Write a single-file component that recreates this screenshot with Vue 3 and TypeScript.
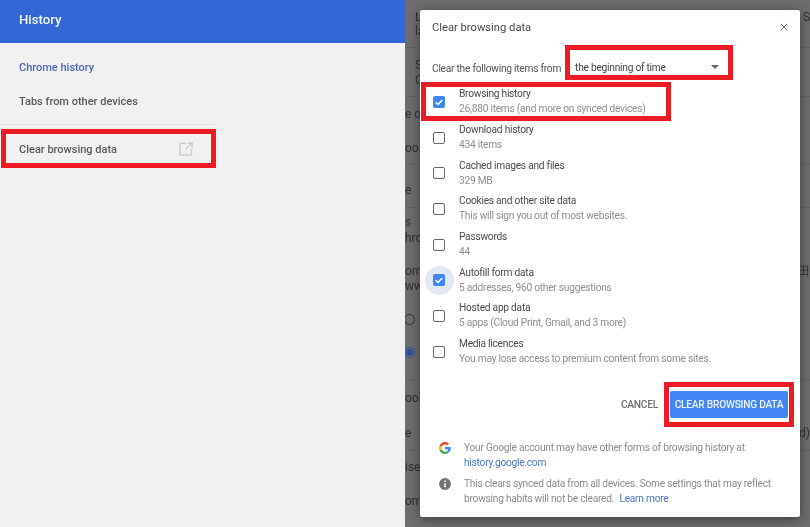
<template>
  <div class="page">
    <aside class="side">
      <header class="side-head">History</header>
      <nav class="side-nav">
        <a class="nav-item active">Chrome history</a>
        <a class="nav-item">Tabs from other devices</a>
        <div class="nav-line"></div>
        <a class="nav-clear">
          <span>Clear browsing data</span>
          <svg class="open-icon" viewBox="0 0 14 14" width="14" height="14">
            <path d="M7 1.500H1v11.500h11.500V7M8.500 1h4.500v4.500M12.500 1.500 6.500 7.500" fill="none" stroke="#cdcdcd" stroke-width="1.500" />
          </svg>
        </a>
      </nav>
    </aside>

    <main class="pane">
      <div class="under">
        <div v-for="(r, i) in underRows" :key="i" class="under-row" :style="{ height: r.h + 'px' }">
          <span v-if="r.left" class="under-left" :style="{ marginLeft: (r.x ?? 0) + 'px' }">{{ r.left }}</span>
          <span v-if="r.radio" class="radio" :class="{ on: r.radio === 2 }"></span>
          <span v-if="r.right" class="under-right">{{ r.right }}</span>
        </div>
      </div>

      <section class="dialog">
        <div class="dlg-head">
          <h2>Clear browsing data</h2>
          <svg viewBox="0 0 10 10" width="8" height="8">
            <path d="M1 1l8 8M9 1L1 9" stroke="#666" stroke-width="1.200" fill="none" />
          </svg>
        </div>

        <div class="from-row">
          <span class="from-label">Clear the following items from</span>
          <span class="from-select">the beginning of time</span>
          <span class="arrow"></span>
        </div>

        <div class="rows">
          <div v-for="item in items" :key="item.title" class="row">
            <span class="box-wrap" :class="{ ripple: item.ripple }">
              <span class="box" :class="{ checked: item.checked }">
                <svg v-if="item.checked" viewBox="0 0 12 12" width="12" height="12">
                  <path d="M2.600 6.200l2.400 2.300 4.300-4.600" fill="none" stroke="#fff" stroke-width="1.500" />
                </svg>
              </span>
            </span>
            <div class="row-text">
              <div class="row-title">{{ item.title }}</div>
              <div class="row-sub">{{ item.sub }}</div>
            </div>
          </div>
        </div>

        <div class="actions">
          <button class="btn-cancel">CANCEL</button>
          <button class="btn-clear">CLEAR BROWSING DATA</button>
        </div>

        <div class="notes">
          <div class="note">
            <svg class="note-icon" viewBox="0 0 48 48" width="12" height="12">
              <path fill="#EA4335" d="M24 9.500c3.500 0 6.700 1.300 9.100 3.500l6.800-6.800C35.800 2.400 30.300 0 24 0 14.600 0 6.500 5.400 2.600 13.200l7.900 6.100C12.400 13.600 17.700 9.500 24 9.500z" />
              <path fill="#4285F4" d="M46.900 24.500c0-1.600-.1-3.100-.4-4.500H24v9h12.900c-.6 3-2.300 5.500-4.800 7.200l7.700 6c4.500-4.200 7.100-10.300 7.100-17.700z" />
              <path fill="#FBBC05" d="M10.500 28.700c-.5-1.400-.8-3-.8-4.700s.3-3.200.8-4.700l-7.900-6.100C.9 16.500 0 20.100 0 24s.9 7.500 2.600 10.800l7.900-6.100z" />
              <path fill="#34A853" d="M24 48c6.500 0 11.900-2.100 15.800-5.800l-7.700-6c-2.100 1.400-4.900 2.300-8.100 2.300-6.300 0-11.600-4.200-13.500-9.900l-7.900 6.100C6.500 42.600 14.600 48 24 48z" />
            </svg>
            <p>Your Google account may have other forms of browsing history at<br /><a>history.google.com</a></p>
          </div>
          <div class="note">
            <svg class="note-icon" viewBox="0 0 24 24" width="12" height="12">
              <path fill="#757575" d="M12 0a12 12 0 1 0 0 24 12 12 0 0 0 0-24zm1.500 18.500h-3v-8h3v8zm0-10.500h-3V5.200h3V8z" />
            </svg>
            <p>This clears synced data from all devices. Some settings that may reflect<br />browsing habits will not be cleared. <a class="learn">Learn more</a></p>
          </div>
        </div>

        <!-- red annotations drawn over the dialog -->
        <div class="mark mark-select"></div>
        <div class="mark mark-history"></div>
        <div class="mark mark-button"></div>
      </section>
    </main>
  </div>
</template>

<script setup lang="ts">
interface Item {
  title: string
  sub: string
  checked?: boolean
  ripple?: boolean
}

interface UnderRow {
  h: number
  left?: string
  x?: number
  right?: string
  radio?: number
}

const items: Item[] = [
  { title: 'Browsing history', sub: '26,880 items (and more on synced devices)', checked: true },
  { title: 'Download history', sub: '434 items' },
  { title: 'Cached images and files', sub: '329 MB' },
  { title: 'Cookies and other site data', sub: 'This will sign you out of most websites.' },
  { title: 'Passwords', sub: '44' },
  { title: 'Autofill form data', sub: '5 addresses, 960 other suggestions', checked: true, ripple: true },
  { title: 'Hosted app data', sub: '5 apps (Cloud Print, Gmail, and 3 more)' },
  { title: 'Media licences', sub: 'You may lose access to premium content from some sites.' },
]

// what is left visible of the settings page beside the dialog
const underRows: UnderRow[] = [
  { h: 24, left: 'L', x: 10, right: 'S' },
  { h: 14, left: 'la', x: 10 },
  { h: 34, left: 'S', x: 10 },
  { h: 15, left: 'C', x: 10 },
  { h: 34, left: 'e ot' },
  { h: 34, left: 'oo' },
  { h: 42, left: 'e' },
  { h: 32, left: 's' },
  { h: 16, left: 'hro' },
  { h: 33, left: 'om', right: '田' },
  { h: 15, left: 'ww' },
  { h: 33, radio: 1 },
  { h: 33, radio: 2 },
  { h: 46, left: 'ook' },
  { h: 35, left: 'e', right: 'd)' },
  { h: 34, left: 'ise' },
  { h: 34, left: 'om' },
]
</script>

<style scoped>
.page {
  display: flex;
  width: 810px;
  height: 527px;
  overflow: hidden;
  font-family: Roboto, "Liberation Sans", sans-serif;
  filter: blur(0.4px);
}

.side {
  width: 405px;
  background: #f1f1f1;
}

.side-head {
  height: 43px;
  padding-left: 19px;
  background: #3367d6;
  color: #f4f6fc;
  font-size: 13.200px;
  font-weight: 500;
  line-height: 40px;
}

.side-nav {
  display: flex;
  flex-direction: column;
  padding-top: 8px;
}

.nav-item {
  height: 34px;
  padding-left: 19px;
  color: #5a5a5a;
  font-size: 11px;
  font-weight: 500;
  line-height: 34px;
}

.nav-item.active {
  color: #4d68bd;
}

.nav-line {
  width: 215px;
  height: 1px;
  margin-top: 5px;
  background: #e2e2e8;
}

.nav-clear {
  display: flex;
  align-items: center;
  justify-content: space-between;
  box-sizing: border-box;
  width: 215px;
  height: 39px;
  margin: 4px 0 0 1px;
  padding: 2px 18px 0 13px;
  border: 5px solid #ed1c24;
  color: #5a5a5a;
  font-size: 11px;
  font-weight: 500;
}

.open-icon {
  margin-top: -2px;
}

.pane {
  position: relative;
  width: 405px;
  background-color: #6d6d6d;
  /* row rules of the page under the scrim */
  background-image:
    linear-gradient(#636363, #636363), linear-gradient(#636363, #636363), linear-gradient(#636363, #636363),
    linear-gradient(#636363, #636363), linear-gradient(#636363, #636363), linear-gradient(#636363, #636363);
  background-size: 100% 1px;
  background-repeat: no-repeat;
  background-position: 0 47px, 0 96px, 0 163px, 0 207px, 0 380px, 0 450px;
  overflow: hidden;
}

.under {
  display: flex;
  flex-direction: column;
  color: #303030;
  font-size: 12px;
}

.under-row {
  display: flex;
  align-items: flex-end;
  justify-content: space-between;
  line-height: 14px;
  white-space: pre;
}

.under-right {
  margin-left: auto;
}

.radio {
  box-sizing: border-box;
  width: 11px;
  height: 11px;
  margin: 0 0 1px -1px;
  border: 1.500px solid #333;
  border-radius: 50%;
}

.radio.on {
  border-color: #2b4f9e;
  background: radial-gradient(circle, #2b4f9e 0 3px, transparent 3.500px);
}

.dialog {
  position: absolute;
  top: 10px;
  left: 15px;
  box-sizing: border-box;
  width: 380px;
  height: 507px;
  background: #fff;
  border-radius: 2px;
  box-shadow: 0 2px 12px rgba(0, 0, 0, 0.45);
}

.dlg-head {
  display: flex;
  align-items: center;
  justify-content: space-between;
  height: 34px;
  padding: 0 12px;
}

.dlg-head h2 {
  margin: 0;
  color: #4a4a4a;
  font-size: 11.200px;
  font-weight: 400;
}

.from-row {
  display: flex;
  align-items: center;
  height: 20px;
  padding: 14px 12px 6px;
  font-size: 10.200px;
  letter-spacing: -0.25px;
}

.from-label {
  color: #555;
}

.from-select {
  margin: -2px 0 0 14px;
  color: #444;
}

.arrow {
  width: 0;
  height: 0;
  margin: -2px 0 0 45px;
  border: 4px solid transparent;
  border-top: 4px solid #666;
  border-bottom: 0;
}

.row {
  display: flex;
  align-items: center;
  height: 35.700px;
  padding-left: 13px;
}

.box-wrap {
  position: relative;
  display: flex;
  width: 12px;
  height: 12px;
}

.box-wrap.ripple::before {
  content: "";
  position: absolute;
  top: -8.500px;
  left: -8.500px;
  width: 29px;
  height: 29px;
  border-radius: 50%;
  background: #e3e8f5;
}

.box {
  position: relative;
  box-sizing: border-box;
  width: 12px;
  height: 12px;
  border: 1.500px solid #666;
  border-radius: 2px;
}

.box.checked {
  border: 0;
  background: #4285f4;
}

.box svg {
  display: block;
}

.row-text {
  margin: -1px 0 0 14px;
  font-size: 10.200px;
  letter-spacing: -0.25px;
  line-height: 15px;
}

.row-title {
  color: #4a4a4a;
}

.row-sub {
  color: #8e8e8e;
}

.actions {
  display: flex;
  justify-content: flex-end;
  align-items: center;
  gap: 12px;
  margin-top: 21px;
  padding-right: 12px;
}

.btn-cancel,
.btn-clear {
  border: 0;
  font-family: inherit;
  font-size: 10.200px;
  font-weight: 500;
  letter-spacing: -0.25px;
}

.btn-cancel {
  padding: 0;
  background: none;
  color: #707070;
}

.btn-clear {
  width: 118px;
  height: 27px;
  padding: 0;
  border-radius: 2px;
  background: #4285f4;
  color: #eef3fd;
}

.notes {
  padding: 22px 18px 0;
  color: #8c8c8c;
  font-size: 10.200px;
  letter-spacing: -0.25px;
  line-height: 15px;
}

.note {
  display: flex;
  gap: 13px;
  margin-bottom: 6px;
}

.note p {
  margin: 0;
  white-space: nowrap;
}

.note a {
  color: #4a76c8;
}

.note-icon {
  flex: none;
  margin: 2px 0 0 1px;
}

.learn {
  margin-left: 3px;
}

.mark {
  position: absolute;
  box-sizing: border-box;
  border: 5px solid #ed1c24;
}

.mark-select {
  top: 35px;
  left: 145px;
  width: 168px;
  height: 35px;
}

.mark-history {
  top: 72px;
  left: 1px;
  width: 250px;
  height: 39px;
}

.mark-button {
  top: 372px;
  left: 244px;
  width: 130px;
  height: 45px;
}
</style>
